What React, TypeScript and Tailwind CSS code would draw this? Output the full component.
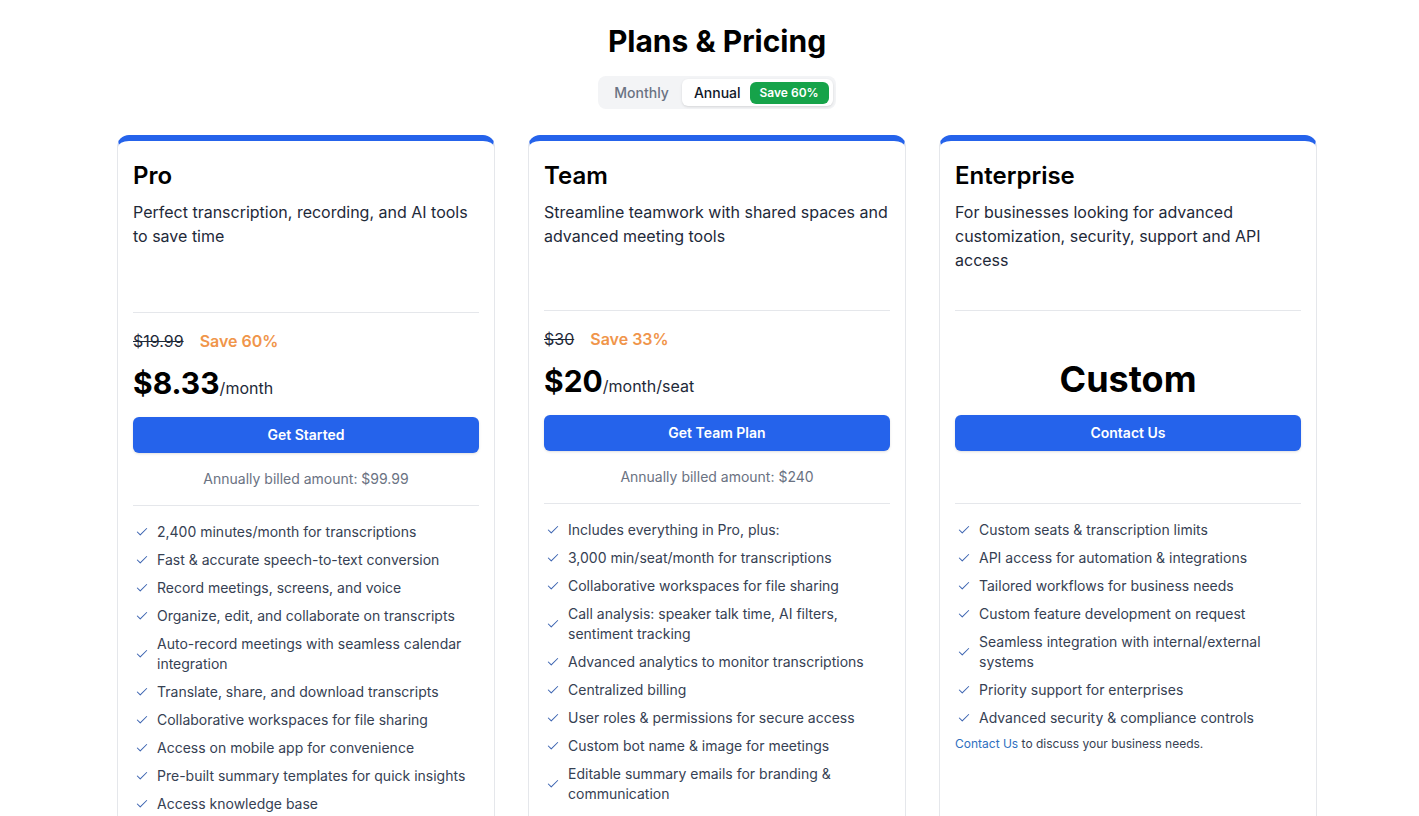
import { Check } from 'lucide-react';

type Plan = {
	name: string;
	description: string;
	descHeight: string;
	oldPrice?: string;
	save?: string;
	price?: string;
	unit?: string;
	cta: string;
	billed?: string;
	features: string[];
	note?: boolean;
};

const plans: Plan[] = [
	{
		name: 'Pro',
		description: 'Perfect transcription, recording, and AI tools to save time',
		descHeight: 'h-[96px]',
		oldPrice: '$19.99',
		save: 'Save 60%',
		price: '$8.33',
		unit: '/month',
		cta: 'Get Started',
		billed: 'Annually billed amount: $99.99',
		features: [
			'2,400 minutes/month for transcriptions',
			'Fast & accurate speech-to-text conversion',
			'Record meetings, screens, and voice',
			'Organize, edit, and collaborate on transcripts',
			'Auto-record meetings with seamless calendar integration',
			'Translate, share, and download transcripts',
			'Collaborative workspaces for file sharing',
			'Access on mobile app for convenience',
			'Pre-built summary templates for quick insights',
			'Access knowledge base',
		],
	},
	{
		name: 'Team',
		description: 'Streamline teamwork with shared spaces and advanced meeting tools',
		descHeight: 'h-[94px]',
		oldPrice: '$30',
		save: 'Save 33%',
		price: '$20',
		unit: '/month/seat',
		cta: 'Get Team Plan',
		billed: 'Annually billed amount: $240',
		features: [
			'Includes everything in Pro, plus:',
			'3,000 min/seat/month for transcriptions',
			'Collaborative workspaces for file sharing',
			'Call analysis: speaker talk time, AI filters, sentiment tracking',
			'Advanced analytics to monitor transcriptions',
			'Centralized billing',
			'User roles & permissions for secure access',
			'Custom bot name & image for meetings',
			'Editable summary emails for branding & communication',
		],
	},
	{
		name: 'Enterprise',
		description:
			'For businesses looking for advanced customization, security, support and API access',
		descHeight: 'h-[94px]',
		cta: 'Contact Us',
		features: [
			'Custom seats & transcription limits',
			'API access for automation & integrations',
			'Tailored workflows for business needs',
			'Custom feature development on request',
			'Seamless integration with internal/external systems',
			'Priority support for enterprises',
			'Advanced security & compliance controls',
		],
		note: true,
	},
];

const PlanCard = ({ plan }: { plan: Plan }): JSX.Element => {
	return (
		<div className="flex-1 rounded-xl border border-gray-200 border-t-[6px] border-t-[#2563eb] bg-white px-[15px] pt-[19px] pb-10">
			<h2 className="text-2xl font-semibold leading-8 text-black">{plan.name}</h2>
			<p className={`mt-[8px] text-base leading-6 text-gray-800 ${plan.descHeight}`}>
				{plan.description}
			</p>
			<div className="mt-4 border-t border-gray-200" />

			{plan.price ? (
				<>
					<div className="mt-4 flex h-6 items-center gap-4 text-base">
						<span className="text-gray-800 line-through">{plan.oldPrice}</span>
						<span className="font-semibold text-[#f0954a]">{plan.save}</span>
					</div>
					<div className="mt-[10px] flex h-10 items-baseline">
						<span className="text-3xl font-bold leading-10 text-black">{plan.price}</span>
						<span className="text-base text-gray-800">{plan.unit}</span>
					</div>
					<button className="mt-[14px] h-9 w-full rounded-md bg-[#2563eb] text-sm font-semibold text-white shadow-sm">
						{plan.cta}
					</button>
				</>
			) : (
				<>
					<div className="mt-4 h-6" />
					<div className="mt-2 h-10 text-center text-4xl font-bold leading-10 text-black">
						Custom
					</div>
					<button className="mt-4 h-9 w-full rounded-md bg-[#2563eb] text-sm font-semibold text-white shadow-sm">
						{plan.cta}
					</button>
				</>
			)}

			<p className="mt-4 h-5 text-center text-sm leading-5 text-gray-500">{plan.billed}</p>
			<div className="mt-4 border-t border-gray-200" />

			<ul className="mt-4 flex flex-col gap-2">
				{plan.features.map((f) => (
					<li key={f} className="flex items-center gap-2 text-sm leading-5 text-gray-700">
						<Check size={14} strokeWidth={1.75} className="ml-[2px] shrink-0 text-[#3b63b0]" />
						<span>{f}</span>
					</li>
				))}
			</ul>
			{plan.note && (
				<p className="mt-2 text-xs leading-4 text-gray-700">
					<a className="text-[#2f6fc0]" href="#">
						Contact Us
					</a>{' '}
					to discuss your business needs.
				</p>
			)}
		</div>
	);
};

const App = (): JSX.Element => {
	return (
		<div
			className="min-h-screen bg-white pl-[15px] pt-[23px]"
			style={{ fontFamily: 'Inter, "Noto Sans", sans-serif' }}
		>
			<h1 className="text-center text-3xl font-bold leading-9 text-black">Plans &amp; Pricing</h1>

			<div className="mt-[17px] flex justify-center">
				<div className="flex h-[33px] items-center rounded-lg bg-gray-100 p-[3px]">
					<button className="h-full px-[13px] text-sm font-medium text-gray-500">Monthly</button>
					<div className="flex h-full items-center gap-[9px] rounded-md bg-white pl-3 pr-1 shadow-sm">
						<span className="text-sm font-medium text-gray-900">Annual</span>
						<span className="rounded-md bg-[#16a34a] px-[10px] py-[3px] text-xs font-semibold text-white">
							Save 60%
						</span>
					</div>
				</div>
			</div>

			<div className="mx-auto mt-[26px] flex w-[1200px] gap-[33px]">
				{plans.map((p) => (
					<PlanCard key={p.name} plan={p} />
				))}
			</div>
		</div>
	);
};

export default App;
